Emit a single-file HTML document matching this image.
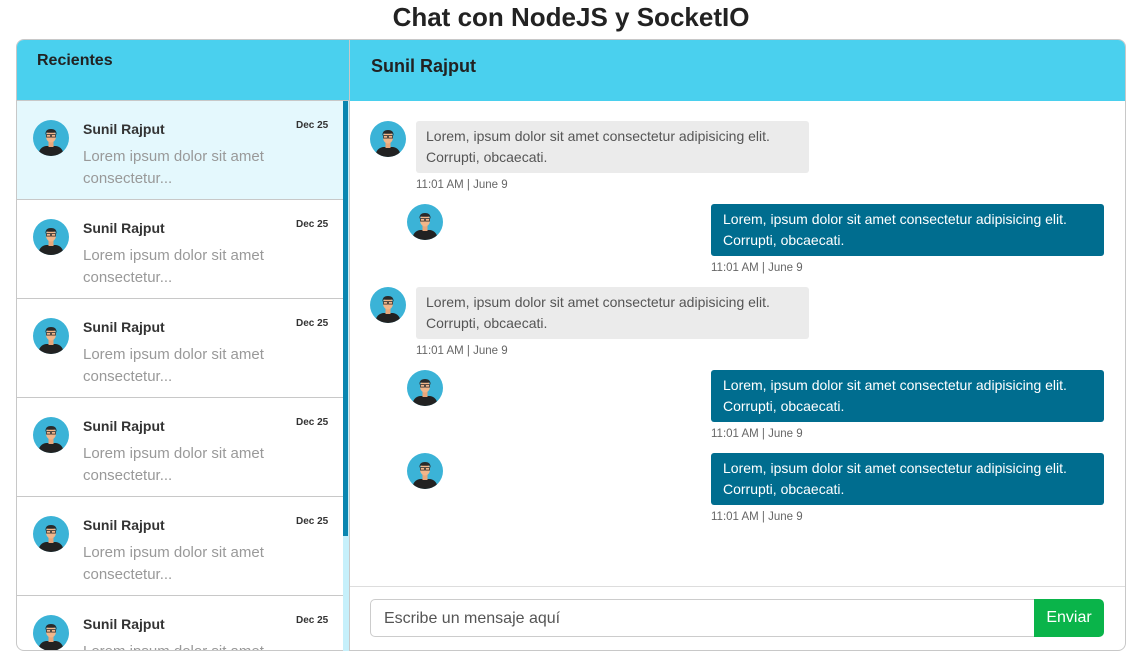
<!DOCTYPE html>
<html><head><meta charset="utf-8"><style>
*{box-sizing:border-box;margin:0;padding:0}
body{width:1142px;height:667px;background:#fff;font-family:"Liberation Sans",sans-serif;position:relative;overflow:hidden;color:#333}
.abs{position:absolute}
h1{position:absolute;left:0;width:1142px;top:1px;text-align:center;font-size:26px;font-weight:bold;color:#222;line-height:32px}
.left{left:16px;top:39px;width:334px;height:612px;border:1px solid #c8c8c8;border-radius:8px 0 0 8px;overflow:hidden;background:#fff}
.lh{position:absolute;left:0;top:0;width:332px;height:61px;background:#4ad0ee;border-bottom:1px solid #c8c8c8}
.lh span{position:absolute;left:20px;top:12px;font-size:16px;font-weight:bold;color:#222}
.item{position:absolute;left:0;width:326px;height:99px;border-bottom:1px solid #c8c8c8}
.item .av{position:absolute;left:16px;top:19px}
.item .nm{position:absolute;left:66px;top:20px;font-size:14px;color:#333;font-weight:bold}
.item .dt{position:absolute;left:279px;top:19px;font-size:10px;color:#333;font-weight:bold}
.item .pv{position:absolute;left:66px;top:45px;font-size:15px;color:#999;line-height:22px}
.track{left:343px;top:101px;width:6px;height:550px;background:#c6f0fb}
.thumb{left:343px;top:101px;width:5px;height:435px;background:#0a86b0}
.right{left:349px;top:39px;width:777px;height:612px;border:1px solid #c8c8c8;border-radius:0 8px 8px 0;overflow:hidden}
.rh{position:absolute;left:0;top:0;width:100%;height:61px;background:#4ad0ee}
.rh span{position:absolute;left:21px;top:16px;font-size:18px;font-weight:bold;color:#222}
.in{position:absolute;width:393px;height:52px;background:#ebebeb;border-radius:3px;padding:5px 10px;font-size:14px;line-height:21px;color:#555}
.out{position:absolute;width:393px;height:52px;background:#006d8f;border-radius:3px;padding:5px 12px;font-size:14px;line-height:21px;color:#fff}
.tm{position:absolute;font-size:11.5px;color:#666}
.foot{position:absolute;left:0;top:546px;width:100%;border-top:1px solid #ddd}
.inp{left:370px;top:599px;width:665px;height:38px;border:1px solid #ccc;border-radius:5px 0 0 5px;font-size:16px;color:#555;padding:10px 13px}
.btn{left:1034px;top:599px;width:70px;height:38px;background:#0ab44a;border-radius:0 5px 5px 0;color:#fff;font-size:16px;text-align:center;line-height:38px}
</style></head><body>
<svg width="0" height="0" style="position:absolute"><defs><symbol id="a" viewBox="0 0 36 36"><circle cx="18" cy="18" r="18" fill="#3bb3d7"/><clipPath id="c"><circle cx="18" cy="18" r="18"/></clipPath><g clip-path="url(#c)"><path d="M5 36 Q6 27 13 26 L23 26 Q30 27 31 36Z" fill="#222"/><rect x="15.5" y="21" width="5" height="6" fill="#e9a77b"/><ellipse cx="18" cy="16.5" rx="5" ry="6" fill="#f2b68a"/><path d="M12.5 15 Q12 9 18 9 Q24 9 23.5 15 L22.5 12.5 Q18 13 13.5 12.5Z" fill="#2a2a2a"/><rect x="13.5" y="14.5" width="4" height="2.6" fill="none" stroke="#333" stroke-width=".8"/><rect x="18.5" y="14.5" width="4" height="2.6" fill="none" stroke="#333" stroke-width=".8"/></g></symbol></defs></svg>
<h1>Chat con NodeJS y SocketIO</h1>
<div class="abs left">
<div class="lh"><span>Recientes</span></div>
<div class="item" style="top:61px;background:#e4f8fd"><svg class="av" width="36" height="36"><use href="#a"/></svg><div class="nm">Sunil Rajput</div><div class="dt">Dec 25</div><div class="pv">Lorem ipsum dolor sit amet<br>consectetur...</div></div>
<div class="item" style="top:160px"><svg class="av" width="36" height="36"><use href="#a"/></svg><div class="nm">Sunil Rajput</div><div class="dt">Dec 25</div><div class="pv">Lorem ipsum dolor sit amet<br>consectetur...</div></div>
<div class="item" style="top:259px"><svg class="av" width="36" height="36"><use href="#a"/></svg><div class="nm">Sunil Rajput</div><div class="dt">Dec 25</div><div class="pv">Lorem ipsum dolor sit amet<br>consectetur...</div></div>
<div class="item" style="top:358px"><svg class="av" width="36" height="36"><use href="#a"/></svg><div class="nm">Sunil Rajput</div><div class="dt">Dec 25</div><div class="pv">Lorem ipsum dolor sit amet<br>consectetur...</div></div>
<div class="item" style="top:457px"><svg class="av" width="36" height="36"><use href="#a"/></svg><div class="nm">Sunil Rajput</div><div class="dt">Dec 25</div><div class="pv">Lorem ipsum dolor sit amet<br>consectetur...</div></div>
<div class="item" style="top:556px;border:none"><svg class="av" width="36" height="36"><use href="#a"/></svg><div class="nm">Sunil Rajput</div><div class="dt">Dec 25</div><div class="pv">Lorem ipsum dolor sit amet<br>consectetur...</div></div>
</div>
<div class="abs track"></div><div class="abs thumb"></div>
<div class="abs right"><div class="rh"><span>Sunil Rajput</span></div><div class="foot"></div></div>
<svg class="abs" style="left:370px;top:121px" width="36" height="36"><use href="#a"/></svg>
<div class="in" style="left:416px;top:121px">Lorem, ipsum dolor sit amet consectetur adipisicing elit.<br>Corrupti, obcaecati.</div>
<div class="tm" style="left:416px;top:179px">11:01 AM | June 9</div>
<svg class="abs" style="left:407px;top:204px" width="36" height="36"><use href="#a"/></svg>
<div class="out" style="left:711px;top:204px">Lorem, ipsum dolor sit amet consectetur adipisicing elit.<br>Corrupti, obcaecati.</div>
<div class="tm" style="left:711px;top:262px">11:01 AM | June 9</div>
<svg class="abs" style="left:370px;top:287px" width="36" height="36"><use href="#a"/></svg>
<div class="in" style="left:416px;top:287px">Lorem, ipsum dolor sit amet consectetur adipisicing elit.<br>Corrupti, obcaecati.</div>
<div class="tm" style="left:416px;top:345px">11:01 AM | June 9</div>
<svg class="abs" style="left:407px;top:370px" width="36" height="36"><use href="#a"/></svg>
<div class="out" style="left:711px;top:370px">Lorem, ipsum dolor sit amet consectetur adipisicing elit.<br>Corrupti, obcaecati.</div>
<div class="tm" style="left:711px;top:428px">11:01 AM | June 9</div>
<svg class="abs" style="left:407px;top:453px" width="36" height="36"><use href="#a"/></svg>
<div class="out" style="left:711px;top:453px">Lorem, ipsum dolor sit amet consectetur adipisicing elit.<br>Corrupti, obcaecati.</div>
<div class="tm" style="left:711px;top:511px">11:01 AM | June 9</div>
<div class="abs inp">Escribe un mensaje aquí</div>
<div class="abs btn">Enviar</div>
</body></html>
